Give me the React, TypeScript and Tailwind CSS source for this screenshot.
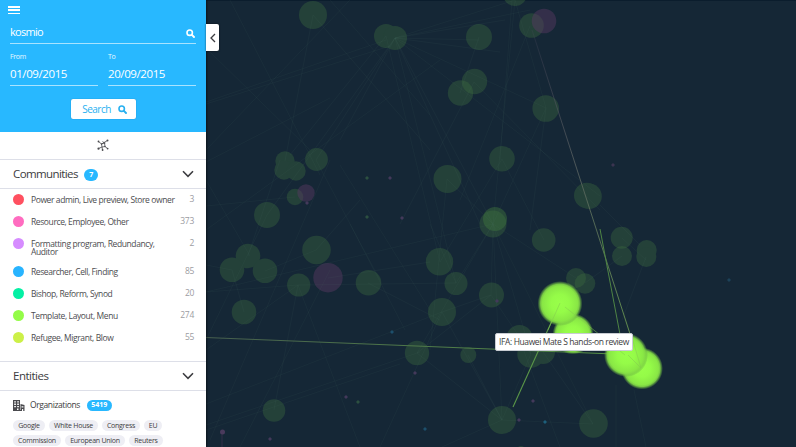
import React from 'react';

type Node = [number, number, number];

const flatNodes: Node[] = [
  [313, 15, 14], [386, 36, 12], [395, 38, 12], [285, 161, 9.7], [284, 170, 9.7], [296, 171, 9.7],
  [316.5, 159.5, 11.4], [295, 197, 8.3], [267, 215, 13], [515, -6, 12],
  [479, 37, 13], [545.7, 108.5, 13.3], [502, 158.7, 12.8],
  [447.5, 179, 14], [586.8, 195.5, 12.8], [589, 196.3, 12.8], [493, 224, 13.5], [248, 256, 12.3], [232, 269.7, 12.3],
  [265, 270.7, 12.3], [316.5, 250, 14.3], [298.7, 285, 11.6], [368.5, 282.7, 12.8], [244, 312, 12.3],
  [274, 410.5, 11.3], [439.5, 261.7, 13.7], [456, 283.5, 11.5], [491.5, 295, 12.5], [442, 312, 14],
  [543.7, 240, 11.8], [519.5, 338, 13], [531, 354, 13.7],
  [543, 352, 12], [417, 353, 12.2], [468.3, 355, 8], [502, 420, 14], [593.5, 423.5, 14.3],
  [521, 451, 5], [646.7, 250, 10], [646.3, 257, 10],
];

const blendedNodes: Node[] = [
  [531.5, 25.5, 12.3], [474.5, 81.5, 12.7], [460.5, 93, 12.7], [576, 278, 10], [585, 283.5, 10.3],
  [621.7, 237.7, 11], [622, 256, 10],
];

const purpleNodes: Node[] = [[544, 21, 12.3], [306, 193, 8.7], [328, 277.7, 14.7]];

const overlaps: Node[] = [[495, 219, 12]];

const dots: [number, number, string][] = [
  [367, 178, '#2c5040'], [390, 178, '#43395a'], [367, 217, '#2c5040'], [402, 218, '#43395a'],
  [307, 203, '#43395a'], [613, 165, '#3b3450'], [392, 332, '#1d4f6b'], [346, 397, '#43395a'],
  [358, 402, '#2c5040'], [270, 439, '#43395a'], [415, 373, '#43395a'], [533, 401, '#43395a'],
  [519, 420, '#43395a'], [545, 422, '#1d5f7b'], [425, 429, '#1d4f6b'], [729, 280, '#1d4259'],
  [497, 301, '#43395a'],
];

const faintEdges: [number, number, number, number][] = [
  [206, 102, 386, 40], [206, 104, 390, 46], [206, 162, 330, 98], [230, 0, 320, 175],
  [206, 48, 310, 150], [313, 15, 430, 150], [386, 36, 290, 155], [395, 38, 267, 215],
  [395, 38, 316, 160], [330, 0, 430, 115], [313, 15, 285, 161], [350, 0, 206, 150],
  [395, 38, 515, 0], [395, 38, 530, 10], [395, 38, 505, 20], [395, 38, 500, 52],
  [395, 38, 479, 40], [395, 38, 546, 108], [395, 38, 493, 224], [395, 38, 480, 224],
  [395, 38, 456, 283], [395, 38, 600, 196], [386, 36, 440, 262], [515, 0, 493, 224],
  [512, 0, 500, 160], [479, 37, 460, 93], [515, 0, 546, 108], [530, 26, 460, 200],
  [546, 108, 493, 224], [546, 108, 530, 230], [474, 82, 400, 224], [474, 82, 600, 210],
  [502, 159, 440, 262], [502, 159, 544, 240], [447, 179, 493, 224], [447, 179, 430, 350],
  [493, 224, 491, 295], [493, 224, 502, 420], [493, 224, 456, 283], [493, 224, 417, 353],
  [493, 224, 206, 292], [493, 224, 576, 278], [493, 224, 593, 424], [493, 224, 531, 354],
  [206, 292, 298, 285], [298, 285, 456, 283], [298, 285, 206, 350], [316, 250, 265, 271],
  [316, 250, 360, 200], [328, 278, 430, 262], [248, 256, 280, 160], [232, 270, 206, 265],
  [267, 215, 206, 340], [298, 285, 274, 410], [298, 285, 360, 447], [244, 312, 232, 270],
  [316, 160, 380, 280], [340, 165, 430, 310], [206, 425, 420, 352], [206, 430, 400, 364],
  [206, 404, 442, 312], [330, 160, 210, 440], [380, 447, 442, 312], [442, 312, 502, 420],
  [417, 353, 502, 420], [417, 353, 491, 295], [491, 295, 531, 354], [491, 295, 442, 312],
  [456, 283, 430, 224], [502, 420, 593, 424], [502, 420, 468, 355], [502, 420, 442, 447],
  [519, 338, 560, 447], [543, 352, 593, 424], [531, 354, 502, 420], [622, 238, 646, 260],
  [622, 256, 585, 283], [646, 257, 622, 320], [600, 205, 640, 245], [634, 390, 646, 447],
  [616, 385, 616, 447], [206, 206, 295, 197], [368, 283, 440, 320], [350, 224, 405, 330],
  [206, 180, 250, 256], [240, 447, 330, 270], [395, 38, 340, 140], [206, 230, 440, 60],
];

const litNodes: Node[] = [[573, 334, 20.5], [560, 303.5, 22.5], [642, 368.5, 21], [626, 355, 22]];

function Graph() {
  return (
    <svg viewBox="206 0 590 447" width="590" height="447" className="block">
      <defs>
        <radialGradient id="lit">
          <stop offset="0" stopColor="#99ff4a" />
          <stop offset="0.4" stopColor="#95fb48" />
          <stop offset="0.78" stopColor="#89e745" />
          <stop offset="0.86" stopColor="#82da45" stopOpacity="0.92" />
          <stop offset="0.94" stopColor="#6fbb42" stopOpacity="0.45" />
          <stop offset="1" stopColor="#5ca040" stopOpacity="0" />
        </radialGradient>
        <linearGradient id="longEdge" gradientUnits="userSpaceOnUse" x1="532" y1="30" x2="640" y2="365">
          <stop offset="0" stopColor="#504a60" stopOpacity="0.2" />
          <stop offset="0.4" stopColor="#5a6262" stopOpacity="0.8" />
          <stop offset="1" stopColor="#65994a" />
        </linearGradient>
        <linearGradient id="leftEdge" gradientUnits="userSpaceOnUse" x1="206" y1="337" x2="626" y2="355">
          <stop offset="0" stopColor="#465e4e" />
          <stop offset="1" stopColor="#579344" />
        </linearGradient>
      </defs>
      <rect x="206" width="590" height="447" fill="#152736" />
      <rect x="206" width="590" height="1" fill="#0b1d2d" />
      <g fill="#3b6a3e" opacity="0.4">
        {flatNodes.map(([x, y, r], i) => <circle key={i} cx={x} cy={y} r={r} />)}
      </g>
      <g fill="#3b6a3e" fillOpacity="0.4">
        {blendedNodes.map(([x, y, r], i) => <circle key={i} cx={x} cy={y} r={r} />)}
      </g>
      <g fill="#5b3a63" fillOpacity="0.45">
        {purpleNodes.map(([x, y, r], i) => <circle key={i} cx={x} cy={y} r={r} />)}
      </g>
      {overlaps.map(([x, y, r], i) => <circle key={i} cx={x} cy={y} r={r} fill="#427c3e" fillOpacity="0.42" />)}
      <g stroke="#5c8070" strokeOpacity="0.1" strokeWidth="0.8">
        {faintEdges.map(([a, b, c, d], i) => <line key={i} x1={a} y1={b} x2={c} y2={d} />)}
      </g>
      {dots.map(([x, y, c], i) => (
        <path key={i} d={`M${x} ${y - 2}l2 2-2 2-2-2z`} fill={c} />
      ))}
      <path d="M222 434v13" stroke="#332f48" />
      <circle cx="222.500" cy="432" r="2.500" fill="#4a3a5c" />
      <line x1="532" y1="30" x2="641" y2="368" stroke="url(#longEdge)" />
      <line x1="600" y1="229" x2="622" y2="345" stroke="#4f8545" />
      <line x1="206" y1="337.500" x2="626" y2="354.500" stroke="url(#leftEdge)" />
      <path d="M560 303L513 407" fill="none" stroke="#5a9648" strokeWidth="1.100" />
      {litNodes.map(([x, y, r], i) => <circle key={i} cx={x} cy={y} r={r} fill="url(#lit)" />)}
      <path d="M560 303l-12 27M565 307l60 48M628 355l13 13M631 334l10 34" fill="none" stroke="#84ca50" strokeOpacity="0.5" />
    </svg>
  );
}

function SearchIcon({ className }: { className: string }) {
  return (
    <svg viewBox="0 0 9 9" className={className} fill="none" stroke="currentColor">
      <circle cx="3.700" cy="3.700" r="2.700" strokeWidth="1.600" />
      <path d="M5.900 5.900L8 8" strokeWidth="1.900" strokeLinecap="round" />
    </svg>
  );
}

function Chevron() {
  return (
    <svg viewBox="0 0 12 8" className="h-2 w-3" fill="none" stroke="#3c3c40" strokeWidth="1.600">
      <path d="M1 1.300L6 6.300L11 1.300" />
    </svg>
  );
}

function NetworkIcon() {
  return (
    <svg viewBox="0 0 12 12" className="h-3 w-3" fill="none" stroke="#4a4a4e" strokeWidth="0.800">
      <path d="M1.500 2.500L4.500 5L10.500 1.500M4.500 5L7.500 4L8 7.500L5 8L4.500 5M5 8L1.500 9.500M8 7.500L10.500 9.500M5 8L5.500 10.800M7.500 4L5.500 2.500" />
      <g fill="#4a4a4e" stroke="none">
        <circle cx="1.500" cy="2.500" r="0.900" /><circle cx="10.500" cy="1.500" r="1" />
        <circle cx="1.500" cy="9.700" r="1.100" /><circle cx="10.600" cy="9.600" r="0.900" />
        <circle cx="5.600" cy="11" r="0.900" /><circle cx="4.500" cy="5" r="0.700" />
        <circle cx="7.700" cy="4" r="0.700" /><circle cx="8" cy="7.500" r="0.700" />
      </g>
    </svg>
  );
}

function BuildingIcon() {
  return (
    <svg viewBox="0 0 12 11" className="h-[11px] w-3" fill="#4a4a4e">
      <path fillRule="evenodd" d="M0 0h7v10h-1.500v-1.500h-1.500v1.500h-4zM1.200 1.200v1.300h1.700v-1.300zM4.200 1.200v1.300h1.700v-1.300zM1.200 3.600v1.300h1.700v-1.300zM4.200 3.600v1.300h1.700v-1.300zM1.200 6v1.300h1.700v-1.300zM4.200 6v1.300h1.700v-1.300z" />
      <path fillRule="evenodd" d="M7.500 4l4 1v6h-1.300v-2h-1.200v2h-1.500zM8.500 6.200v1.200h1.900v-1.200z" />
      <path d="M0 10h8v1h-8z" />
    </svg>
  );
}

const communities = [
  { name: 'Power admin, Live preview, Store owner', count: 3, color: 'bg-[#ff5060]', h: 'h-[22px]' },
  { name: 'Resource, Employee, Other', count: 373, color: 'bg-[#ff6cc0]', h: 'h-[22px]' },
  { name: 'Formatting program, Redundancy, Auditor', count: 2, color: 'bg-[#d68cff]', h: 'h-[28px]' },
  { name: 'Researcher, Cell, Finding', count: 85, color: 'bg-[#28b4ff]', h: 'h-[22px]' },
  { name: 'Bishop, Reform, Synod', count: 20, color: 'bg-[#04f0a4]', h: 'h-[22px]' },
  { name: 'Template, Layout, Menu', count: 274, color: 'bg-[#94fc48]', h: 'h-[22px]' },
  { name: 'Refugee, Migrant, Blow', count: 55, color: 'bg-[#ccf048]', h: 'h-[22px]' },
];

const tagRows = [
  [['Google', 'w-8'], ['White House', 'w-[49px]'], ['Congress', 'w-[38px]'], ['EU', 'w-[18px]']],
  [['Commission', 'w-12'], ['European Union', 'w-[60px]'], ['Reuters', 'w-[34px]']],
];

function DateField({ label, value }: { label: string; value: string }) {
  return (
    <div className="w-[88px] border-b border-white/60 pb-[5px]">
      <div className="h-[10px] text-[7px] leading-[10px] tracking-[-0.300px] text-white/90">{label}</div>
      <div className="mt-[4px] h-[14px] text-[11.500px] leading-[15px] tracking-[-0.400px]">{value}</div>
    </div>
  );
}

export default function App() {
  return (
    <div className="flex h-[447px] w-[796px] overflow-hidden bg-[#152736] font-['Open_Sans','Noto_Sans',sans-serif]">
      <aside className="relative z-10 flex w-[206px] shrink-0 flex-col bg-white text-[#3c3c40] shadow-[1px_0_2px_rgba(0,0,0,0.5)]">
        <header className="h-[132px] bg-[#28b8ff] pt-[6px] text-white">
          <div className="ml-2 flex h-2 w-3 flex-col justify-between">
            <div className="h-[1.500px] bg-white" />
            <div className="h-[1.500px] bg-white" />
            <div className="h-[1.500px] bg-white" />
          </div>
          <div className="mx-[10px] mt-[10px] flex h-5 w-[186px] justify-between border-b border-white/60">
            <span className="h-[14px] text-[11px] leading-[15px] tracking-[-0.700px]">kosmio</span>
            <SearchIcon className="mt-[5px] mr-px h-[9px] w-[9px]" />
          </div>
          <div className="mx-[10px] mt-[8px] flex w-[186px] justify-between">
            <DateField label="From" value="01/09/2015" />
            <DateField label="To" value="20/09/2015" />
          </div>
          <button className="mt-[13px] ml-[70.500px] flex h-5 w-[65px] items-center justify-center gap-[7px] rounded-[2px] bg-white pl-[3px] text-[10px] tracking-[-0.500px] text-[#28b0f0] shadow-[0_0_1px_rgba(0,60,110,0.6)]">
            <span>Search</span>
            <SearchIcon className="h-[9px] w-[9px]" />
          </button>
        </header>
        <div className="flex h-[28px] shrink-0 items-center justify-center border-b border-[#dddfe8] pb-[2px]">
          <NetworkIcon />
        </div>
        <div className="flex h-[29px] shrink-0 items-center border-b border-[#dddfe8] pr-3 pl-[13px]">
          <span className="text-[11.500px] leading-none tracking-[-0.600px]">Communities</span>
          <span className="mt-[2px] ml-[6.500px] flex h-3 w-[14px] items-center justify-center rounded-full bg-[#28b8ff] text-[7px] font-bold text-white">7</span>
          <span className="ml-auto"><Chevron /></span>
        </div>
        <ul className="h-[172px] shrink-0 pt-[5px] pr-3 pl-[13px]">
          {communities.map((c) => (
            <li key={c.name} className={`flex ${c.h}`}>
              <span className={`h-[11px] w-[11px] shrink-0 rounded-full ${c.color}`} />
              <span className="mt-[2px] ml-[7px] w-[146px] text-[8.500px] leading-[8px] tracking-[-0.400px] text-[#4c4c50]">{c.name}</span>
              <span className="mt-[1px] ml-auto text-[8.500px] leading-[8px] tracking-[-0.300px] text-[#9c9ca2]">{c.count}</span>
            </li>
          ))}
        </ul>
        <div className="flex h-[30px] shrink-0 items-center border-y border-[#dddfe8] pr-3 pl-[13px]">
          <span className="text-[11.500px] leading-none tracking-[-0.500px]">Entities</span>
          <span className="ml-auto"><Chevron /></span>
        </div>
        <div className="flex h-[29px] shrink-0 items-center pl-[13px]">
          <BuildingIcon />
          <span className="ml-[5px] text-[8.500px] leading-none tracking-[-0.400px]">Organizations</span>
          <span className="ml-[7px] flex h-[11px] w-[25px] items-center justify-center rounded-full bg-[#28b8ff] text-[7px] font-bold text-white">5419</span>
        </div>
        <div className="flex flex-col gap-[4px] pl-[13px]">
          {tagRows.map((row, i) => (
            <div key={i} className="flex gap-[4px]">
              {row.map(([name, w]) => (
                <span key={name} className={`flex h-[11px] shrink-0 items-center justify-center rounded-full bg-[#eeeef4] text-[7px] leading-none tracking-[-0.250px] whitespace-nowrap ${w}`}>{name}</span>
              ))}
            </div>
          ))}
        </div>
      </aside>
      <main className="relative h-[447px] w-[590px] shrink-0">
        <Graph />
        <button className="absolute top-[24px] left-0 z-20 flex h-[27px] w-[13px] items-center justify-center rounded-r-[2px] bg-white shadow-[0_0_2px_rgba(0,0,0,0.7)]">
          <svg viewBox="0 0 6 10" className="h-[10px] w-[6px]" fill="none" stroke="#3c3c40" strokeWidth="1.300">
            <path d="M5 1L1 5L5 9" />
          </svg>
        </button>
        <div className="absolute top-[333px] left-[289px] flex h-[18px] w-[138px] items-center justify-center rounded-[2px] border border-[#c8ccd2] bg-white text-[8.500px] tracking-[-0.400px] whitespace-nowrap text-[#3c3c40]">
          IFA: Huawei Mate S hands-on review
        </div>
      </main>
    </div>
  );
}
